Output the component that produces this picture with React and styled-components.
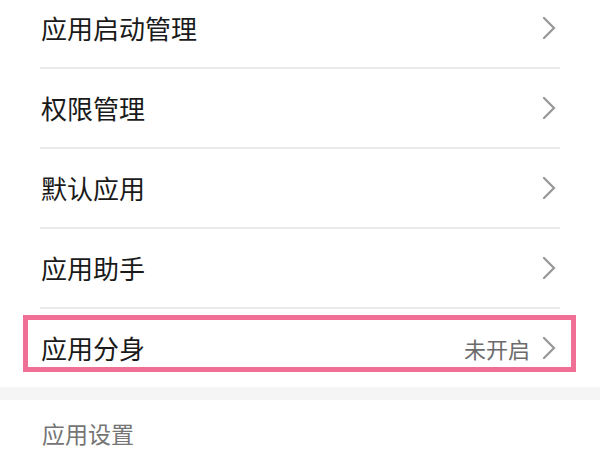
import React from "react";
import styled, { createGlobalStyle } from "styled-components";

const Global = createGlobalStyle`
  html, body { margin: 0; padding: 0; background: #ffffff; overflow: hidden; }
  body { font-family: "Noto Sans CJK SC", "Noto Sans", sans-serif; }
`;

const Page = styled.div`
  width: 600px;
  height: 450px;
  overflow: hidden;
  background: #ffffff;
`;

const List = styled.div`
  margin-top: -11px;
  display: flex;
  flex-direction: column;
`;

const Row = styled.div`
  position: relative;
  height: 78px;
  margin: 0 40px;
  padding: 0 4px 0 1px;
  display: flex;
  align-items: center;
  justify-content: space-between;
  border-bottom: ${(p) => (p.$last ? "none" : "2px solid #ebebeb")};
`;

const Label = styled.span`
  font-size: 26px;
  color: #1a1a1a;
  line-height: 1;
`;

const Right = styled.div`
  display: flex;
  align-items: center;
  gap: 12px;
`;

const Value = styled.span`
  font-size: 22px;
  color: #6b6b6b;
  line-height: 1;
`;

const Highlight = styled.div`
  position: absolute;
  left: -17px;
  right: -16px;
  top: 6px;
  height: 57px;
  box-sizing: border-box;
  border: 5px solid #f07095;
  pointer-events: none;
`;

const Band = styled.div`
  height: 13px;
  background: #f5f5f5;
`;

const SectionHeader = styled.div`
  height: 50px;
  box-sizing: border-box;
  padding: 22px 0 0 42px;
  font-size: 23px;
  line-height: 1;
  color: #757575;
`;

const Chevron = () => (
  <svg width="14" height="24" viewBox="0 0 14 24" aria-hidden="true">
    <polyline
      points="2,2 12,12 2,22"
      fill="none"
      stroke="#969696"
      strokeWidth="2.2"
      strokeLinecap="round"
      strokeLinejoin="miter"
    />
  </svg>
);

const items = [
  { label: "应用启动管理" },
  { label: "权限管理" },
  { label: "默认应用" },
  { label: "应用助手" },
  { label: "应用分身", value: "未开启", highlight: true },
];

export default function App() {
  return (
    <Page>
      <Global />
      <List>
        {items.map((it, i) => (
          <Row key={it.label} $last={i === items.length - 1}>
            <Label>{it.label}</Label>
            <Right>
              {it.value && <Value>{it.value}</Value>}
              <Chevron />
            </Right>
            {it.highlight && <Highlight />}
          </Row>
        ))}
      </List>
      <Band />
      <SectionHeader>应用设置</SectionHeader>
    </Page>
  );
}
